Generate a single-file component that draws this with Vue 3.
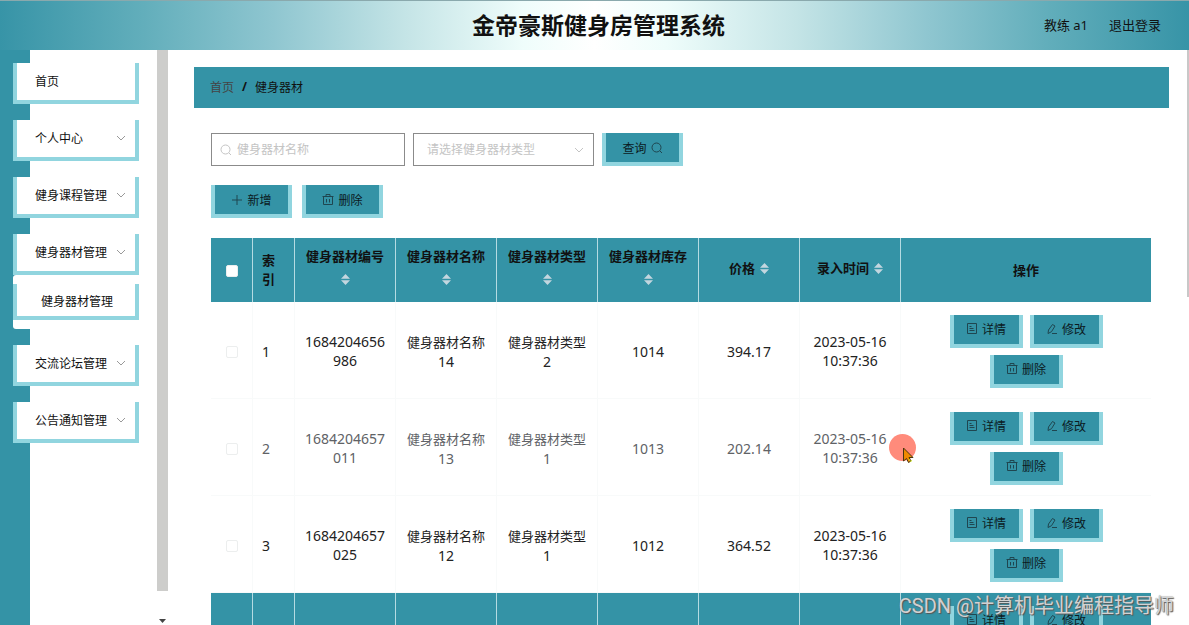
<script setup>
import { ref } from 'vue'

const menu = [
  { label: '首页' },
  { label: '个人中心', expandable: true },
  { label: '健身课程管理', expandable: true },
  { label: '健身器材管理', expandable: true, children: ['健身器材管理'] },
  { label: '交流论坛管理', expandable: true },
  { label: '公告通知管理', expandable: true }
]

const columns = [
  { label: '健身器材编号', stacked: true },
  { label: '健身器材名称', stacked: true },
  { label: '健身器材类型', stacked: true },
  { label: '健身器材库存', stacked: true },
  { label: '价格' },
  { label: '录入时间' }
]

const rows = ref([
  { code: '1684204656986', name: 14, type: 2, stock: 1014, price: '394.17', date: '2023-05-16', time: '10:37:36' },
  { code: '1684204657011', name: 13, type: 1, stock: 1013, price: '202.14', date: '2023-05-16', time: '10:37:36', leaving: true },
  { code: '1684204657025', name: 12, type: 1, stock: 1012, price: '364.52', date: '2023-05-16', time: '10:37:36' },
  { code: '1684204657040', name: 11, type: 1, stock: 1011, price: '310.25', date: '2023-05-16', time: '10:37:36', hovered: true }
])

const actions = [
  { label: '详情', icon: 'doc' },
  { label: '修改', icon: 'pen' },
  { label: '删除', icon: 'bin' }
]

const iconPaths = {
  doc: 'M1.5 .5h9v10h-9zM3.5 3.5h2M3.5 5.500h4M3.5 7.500h5',
  pen: 'M2 10.5L2.500 7L6.500 1.500L9 3L5.500 8.700L2 10.5M6 10.5h5',
  bin: 'M.5 2.5h11M1.500 2.5v8h9v-8M4 2.5v-2h4v2M4.500 5v3.500M7.500 5v3.500',
  plus: 'M6 1v10M1 6h10'
}

const keyword = ref('')
const category = ref('')
</script>

<template>
  <div class="page">
    <header class="topbar">
      <span class="side"></span>
      <h1>金帝豪斯健身房管理系统</h1>
      <div class="side user">
        <span>教练 a1</span>
        <a href="#">退出登录</a>
      </div>
    </header>

    <div class="body">
      <aside class="sidebar">
        <nav>
          <ul class="menu">
            <li v-for="item in menu" :key="item.label">
              <button type="button" class="menu-item">
                <span>{{ item.label }}</span>
                <svg v-if="item.expandable" class="chev" width="10" height="6" viewBox="0 0 10 6"><path d="M1 1l4 4l4-4" /></svg>
              </button>
              <div v-if="item.children" class="submenu">
                <a v-for="child in item.children" :key="child" href="#" class="sub-item">{{ child }}</a>
              </div>
            </li>
          </ul>
        </nav>
        <div class="track">
          <div class="thumb"></div>
          <svg width="7" height="4" viewBox="0 0 7 4"><path d="M0 0h7L3.500 4z" fill="#444" /></svg>
        </div>
      </aside>

      <main class="main">
        <nav class="crumbs">
          <a href="#">首页</a><b>/</b><span>健身器材</span>
        </nav>

        <section class="panel">
          <form class="filters" @submit.prevent>
            <label class="field keyword">
              <svg width="12" height="12" viewBox="0 0 12 12"><circle cx="5.500" cy="5.500" r="4.500" /><path d="M9 9l2 2" /></svg>
              <input v-model="keyword" type="text" placeholder="健身器材名称" aria-label="健身器材名称" />
            </label>
            <label class="field category">
              <select v-model="category" aria-label="健身器材类型">
                <option value="">请选择健身器材类型</option>
              </select>
              <svg width="10" height="6" viewBox="0 0 10 6"><path d="M1 1l4 4l4-4" /></svg>
            </label>
            <button type="submit" class="btn">
              查询
              <svg width="12" height="12" viewBox="0 0 12 12"><circle cx="5.500" cy="5.500" r="4.500" /><path d="M9 9l2 2" /></svg>
            </button>
          </form>

          <div class="tools">
            <button type="button" class="btn">
              <svg width="12" height="12" viewBox="0 0 12 12"><path :d="iconPaths.plus" /></svg>新增
            </button>
            <button type="button" class="btn">
              <svg width="12" height="12" viewBox="0 0 12 12"><path :d="iconPaths.bin" /></svg>删除
            </button>
          </div>

          <table>
            <colgroup>
              <col class="c-small" />
              <col class="c-small" />
              <col v-for="c in columns" :key="c.label" class="c-data" />
              <col />
            </colgroup>
            <thead>
              <tr>
                <th><input type="checkbox" aria-label="全选" /></th>
                <th class="index">索引</th>
                <th v-for="c in columns" :key="c.label">
                  <div class="sortable" :class="{ stacked: c.stacked }">
                    <span>{{ c.label }}</span>
                    <svg width="9" height="11" viewBox="0 0 9 11"><path d="M0 4.800L4.500 0L9 4.800zM0 6.200h9L4.500 11z" fill="#c3d6df" /></svg>
                  </div>
                </th>
                <th>操作</th>
              </tr>
            </thead>
            <tbody>
              <tr v-for="(r, i) in rows" :key="r.code" :class="{ leaving: r.leaving, hovered: r.hovered }">
                <td><input type="checkbox" :aria-label="'选择 ' + (i + 1)" /></td>
                <td class="index">{{ i + 1 }}</td>
                <td>{{ r.code }}</td>
                <td><span class="cn">健身器材名称</span>{{ r.name }}</td>
                <td><span class="cn">健身器材类型</span>{{ r.type }}</td>
                <td>{{ r.stock }}</td>
                <td>{{ r.price }}</td>
                <td>{{ r.date }}<br />{{ r.time }}</td>
                <td>
                  <div class="actions">
                    <button v-for="a in actions" :key="a.label" type="button" class="btn small">
                      <svg width="12" height="12" viewBox="0 0 12 12"><path :d="iconPaths[a.icon]" /></svg>{{ a.label }}
                    </button>
                  </div>
                </td>
              </tr>
            </tbody>
          </table>
        </section>
        <div class="page-thumb"></div>
      </main>
    </div>

    <svg class="pointer" width="28" height="30" viewBox="0 0 28 30">
      <circle cx="13.500" cy="13.500" r="13.500" fill="#ff8b7b" />
      <path d="M14.500 14v13l3-2.500l2 4l2.500-1.500l-2-3.500h4z" fill="#f08a00" stroke="#4a3510" stroke-width="1" />
      <path d="M20 25l1.500 2.500l1.500-1" fill="none" stroke="#c8e020" stroke-width="1" />
    </svg>
    <div class="watermark">CSDN @计算机毕业编程指导师</div>
  </div>
</template>

<style>
body {
  margin: 0;
  overflow: hidden;
}
</style>

<style scoped>
* {
  box-sizing: border-box;
}
.page {
  --teal: #3493a6;
  --edge: #91d5df;
  position: relative;
  display: flex;
  flex-direction: column;
  height: 100vh;
  overflow: hidden;
  background: #fff;
  color: #111;
  font-family: "Noto Sans", "Noto Sans CJK SC", sans-serif;
  font-size: 12px;
}
a {
  color: inherit;
  text-decoration: none;
}
button {
  font: inherit;
  color: inherit;
}
svg {
  flex: none;
  fill: none;
  stroke: currentColor;
  stroke-width: 1;
}
.topbar {
  display: flex;
  flex: none;
  align-items: center;
  height: 50px;
  padding: 0 28px 2px 36px;
  border-top: 1px solid #8aa9ad;
  background: linear-gradient(90deg, #3794a7 0%, #62aebb 12%, #8fc6d0 23%, #c4e4e6 34%, #effdfb 44%, #fff 50%, #effdfb 56%, #c4e4e6 67%, #8fc6d0 78%, #62aebb 88%, #3794a7 100%);
}
h1 {
  margin: 0;
  font-size: 23px;
  line-height: 30px;
}
.side {
  flex: 1;
}
.user {
  display: flex;
  justify-content: flex-end;
  gap: 21px;
  font-size: 13px;
}
.body {
  display: flex;
  flex: 1;
  min-height: 0;
}
.sidebar {
  display: flex;
  flex: none;
  justify-content: space-between;
  width: 168px;
  padding-left: 13px;
  background: linear-gradient(90deg, var(--teal) 30px, #fff 30px);
}
.menu {
  display: flex;
  flex-direction: column;
  gap: 16px;
  width: 126px;
  margin: 0;
  padding: 13px 0 0;
  list-style: none;
}
.menu-item,
.sub-item {
  display: flex;
  align-items: center;
  justify-content: space-between;
  width: 100%;
  height: 41px;
  padding: 0 9px 2px 18px;
  border: solid var(--edge);
  border-width: 0 4px 4px;
  background: #fff;
}
.chev {
  color: #999;
}
.submenu {
  padding: 9px 0;
  border-radius: 3px;
  background: #fff;
}
.sub-item {
  height: 36px;
  padding: 2px 9px 0 24px;
}
.track {
  display: flex;
  flex-direction: column;
  align-items: center;
  justify-content: space-between;
  width: 11px;
  padding-bottom: 2px;
}
.thumb {
  width: 100%;
  height: 94.4%;
  background: #cdcdcb;
}
.track svg {
  stroke: none;
}
.main {
  position: relative;
  flex: 1;
  min-width: 0;
  padding: 17px 20px 0 26px;
}
.page-thumb {
  position: absolute;
  top: 0;
  right: 0;
  width: 2px;
  height: 43%;
  background: #c8c8c8;
}
.crumbs {
  display: flex;
  align-items: center;
  height: 41px;
  padding: 0 16px 2px;
  background: var(--teal);
}
.crumbs a {
  color: #444;
}
.crumbs b {
  margin: 0 8px;
}
.panel {
  padding: 25px 18px 0 17px;
}
.filters {
  display: flex;
  align-items: center;
}
.field {
  position: relative;
  display: flex;
  align-items: center;
  height: 33px;
  margin-right: 8px;
  border: 1px solid #8b8b8b;
  color: #c4c4c4;
}
.keyword {
  width: 194px;
  padding-left: 8px;
}
.category {
  width: 181px;
}
.field input,
.field select {
  flex: 1;
  min-width: 0;
  height: 100%;
  border: 0;
  outline: 0;
  background: transparent;
  color: inherit;
  font: inherit;
}
.field input {
  padding: 0 5px;
}
.field input::placeholder {
  color: #c4c4c4;
}
.field select {
  padding: 0 13px;
  appearance: none;
}
.category svg {
  position: absolute;
  right: 9px;
  pointer-events: none;
}
.btn {
  display: inline-flex;
  align-items: center;
  justify-content: center;
  gap: 4px;
  width: 81px;
  height: 33px;
  padding: 0;
  border: solid var(--edge);
  border-width: 0 4px 4px;
  background: var(--teal);
  color: #0b1a1e;
}
.small {
  width: 73px;
}
.btn svg {
  stroke: #1f4650;
}
.tools {
  display: flex;
  gap: 10px;
  margin: 19px 0 20px;
}
table {
  width: 100%;
  table-layout: fixed;
  border-spacing: 0;
}
.c-small {
  width: 42px;
}
.c-data {
  width: 101px;
}
th,
td {
  padding: 0 9px;
  border-right: 1px solid #f8fafa;
  line-height: 19px;
  text-align: center;
  word-break: break-all;
}
th {
  height: 64px;
  border-right-color: #b5dbe2;
  background: var(--teal);
  font-size: 13px;
}
td {
  height: 97px;
  padding-top: 2px;
  border-bottom: 1px solid #f8fafa;
  color: #222;
  font-size: 14px;
}
th:last-child,
td:last-child {
  border-right: 0;
}
.index {
  text-align: left;
}
.cn {
  font-size: 13px;
}
.leaving td {
  color: #606266;
}
.hovered td {
  border-color: #b5dbe2;
  background: var(--teal);
}
.sortable {
  display: flex;
  align-items: center;
  justify-content: center;
  gap: 5px;
  padding-bottom: 4px;
}
.stacked {
  flex-direction: column;
  gap: 8px;
  padding-bottom: 9px;
}
.sortable svg {
  stroke: none;
}
td input,
th input {
  display: block;
  width: 12px;
  height: 12px;
  margin: 2px auto 0;
  border: 1px solid #eceeee;
  border-radius: 2px;
  appearance: none;
  background: #fff;
}
.actions {
  display: flex;
  flex-wrap: wrap;
  justify-content: center;
  gap: 7px;
  width: 160px;
  margin: 0 auto;
  font-size: 12px;
}
.pointer {
  position: absolute;
  top: 434px;
  left: 889px;
  stroke: none;
}
.watermark {
  position: absolute;
  right: 15px;
  bottom: 5px;
  color: rgba(225, 225, 225, 0.9);
  font-family: Roboto, "Noto Sans CJK SC", sans-serif;
  font-size: 20px;
  line-height: 28px;
  text-shadow: 1px 1px 1px #555, 0 0 1px #777;
}
</style>
